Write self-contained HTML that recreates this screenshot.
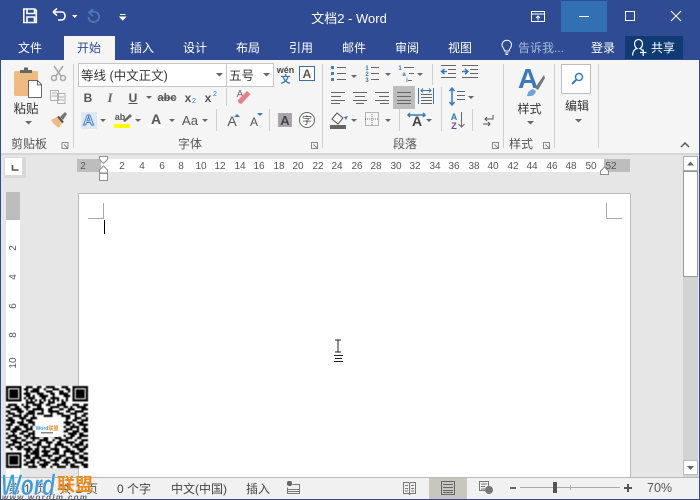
<!DOCTYPE html>
<html><head><meta charset="utf-8"><style>
html,body{margin:0;padding:0;width:700px;height:500px;overflow:hidden;background:#f1f1f1}
svg{display:block}
text{font-family:"Liberation Sans","Noto Sans CJK SC",sans-serif;font-size:12px;fill:#444}
.m{text-anchor:middle}
.r text{font-size:10px;fill:#555;text-anchor:middle}
.w{fill:#fff}
.tab text{fill:#fff;text-anchor:middle}
.arr{fill:#666}
.l{stroke:#666;stroke-width:1;fill:none}
.b{stroke:#4a7ebb;fill:none}
.sep{stroke:#d0d0d0;stroke-width:1}
</style></head><body>
<svg width="700" height="500" viewBox="0 0 700 500" xmlns="http://www.w3.org/2000/svg">
<defs><filter id="soft" x="-2%" y="-2%" width="104%" height="104%"><feGaussianBlur stdDeviation="0.4"/></filter></defs>
<rect width="700" height="60" fill="#2f4b93"/>
<rect y="60" width="700" height="93" fill="#f5f5f5"/>
<rect y="153" width="700" height="2" fill="#d6d6d6"/>
<rect y="155" width="700" height="322" fill="#e6e6e6"/>
<rect y="477" width="700" height="22" fill="#f1f1f1"/>
<rect y="499" width="700" height="1" fill="#2f4b93"/>
<rect x="0" y="0" width="1" height="500" fill="#2f4b93"/>
<rect x="699" y="0" width="1" height="500" fill="#2f4b93"/>

<!-- QAT -->
<g fill="none" stroke="#fff" stroke-width="1.6">
<path d="M23.800 9h11l1.500 1.500v12h-12.500z"/><path d="M27 9.500v4h7.500v-4M27 22v-5h7.500v5"/>
<path d="M53 12h8.500q3.500 0 3.500 4t-4 4h-3M53 12l4-3.500M53 12l4 3.500"/>
</g>
<path d="M72 15h5.500l-2.750 3z" fill="#fff"/>
<path d="M93 9l-4 3.500 4 3.500M89.500 12.500q3-1.500 6-.5 4.500 2 3.500 6.500-2 4-6.500 3.500-4-1-4-5" fill="none" stroke="#4d7ab5" stroke-width="1.700"/>
<path d="M120 14.500h5.500M120 17h5.500l-2.750 3z" stroke="#fff" stroke-width="1" fill="#fff"/>
<text x="349" y="23" class="m w" style="font-size:13px">文档2 - Word</text>

<!-- window buttons -->
<g fill="none" stroke="#fff" stroke-width="1">
<path d="M531.500 11.500h13v10h-13zM531.500 14h13M538 20.500v-4M536 18l2-2 2 2"/>
<rect x="561" y="1" width="46" height="31" fill="#3170b3" stroke="none"/>
<path d="M579 16.500h10"/><rect x="625.500" y="11.500" width="9" height="9"/><path d="M671 11l10 10M681 11l-10 10"/>
</g>

<!-- tabs -->
<rect x="64" y="36" width="51" height="24" fill="#f5f5f5"/>
<g class="tab">
<text x="30" y="52">文件</text><text x="142" y="52">插入</text><text x="195" y="52">设计</text><text x="248" y="52">布局</text><text x="301" y="52">引用</text><text x="354" y="52">邮件</text><text x="407" y="52">审阅</text><text x="460" y="52">视图</text><text x="603" y="52">登录</text>
</g>
<text x="89" y="52" class="m" style="fill:#2f4b93">开始</text>
<path d="M504.500 51c0-2.500-2.500-3.500-2.500-6a4.800 4.800 0 0 1 9.600 0c0 2.500-2.500 3.500-2.500 6zM505 53h3.600M505.500 54.500h2.600" fill="none" stroke="#fff" stroke-width="1"/>
<text x="518" y="52" style="fill:#a9bad8">告诉我...</text>
<rect x="625" y="36" width="58" height="23" fill="#0f3a73"/>
<path d="M632.500 55.500q.5-6 4.500-7-2.500-1.500-2.500-5a4 4 0 0 1 8 0q0 3.500-2.500 5 1.500.5 2.500 2M640 52.500h6.500M643.250 49.500v6.500" fill="none" stroke="#fff" stroke-width="1.200"/>
<text x="663" y="52" class="m w">共享</text>

<!-- separators -->
<g class="sep">
<path d="M73.500 64v84M322.500 64v84M503.500 64v84M554.500 64v84M598.500 64v84"/>
<path d="M226.500 88v18M216.500 109v22M269.500 109v22M432.500 64v21M441.500 87v44M399.500 109v22M441.500 109v22M472.500 109v22"/>
</g>

<!-- clipboard -->
<rect x="14" y="71" width="24" height="25" rx="1.500" fill="#eebb82"/>
<path d="M20 73v-3h4v-2.500h4v2.500h4v3z" fill="#666"/>
<path d="M28.500 80.500h9l4 4v13h-13z" fill="#fff" stroke="#666"/>
<path d="M37.500 80.500v4.500h4" fill="none" stroke="#666"/>
<text x="26" y="113" class="m" style="font-size:12.500px;fill:#333">粘贴</text>
<path d="M25 121h7l-3.500 3.500z" class="arr"/>
<g fill="none" stroke="#aaa" stroke-width="1.600"><path d="M54 66l7 10M63 66l-7 10"/><circle cx="54" cy="78" r="2.500"/><circle cx="63" cy="78" r="2.500"/></g>
<g fill="none" stroke="#b0b0b0"><path d="M50.500 90.500h8v10h-8zM57.500 93.500h7.500v10h-7.500zM52 93h5M52 96h5M59 97h5M59 100h5"/></g>
<path d="M51 120l6-3 5 6-3 5q-5-3-8-8z" fill="#eebb82"/><path d="M57 117l2-1 5 6-2 1z" fill="#555"/><path d="M60 117l5-5 2 2-4 6z" fill="#777"/>
<text x="29" y="148" class="m" style="fill:#555">剪贴板</text>
<path d="M62 142.500h6v6M62 142.500v6h6M64 144.500l4 4" fill="none" stroke="#888"/>

<!-- font -->
<rect x="78.500" y="63.500" width="148" height="23" fill="#fff" stroke="#c6c6c6"/>
<rect x="226.500" y="63.500" width="47" height="23" fill="#fff" stroke="#c6c6c6"/>
<text x="81" y="80" style="font-size:12.500px;fill:#333">等线 (中文正文)</text>
<text x="229" y="80" style="font-size:12.500px;fill:#333">五号</text>
<path d="M216 73h7l-3.500 3.500zM263 73h7l-3.500 3.500z" class="arr"/>
<text x="285.500" y="73" class="m" style="font-size:9px;font-weight:bold;fill:#444">wén</text>
<text x="285.500" y="83" class="m" style="font-size:10px;font-weight:bold;fill:#2e75b6">文</text>
<rect x="299.500" y="66.500" width="15" height="14" fill="#fff" stroke="#3a6ea5"/>
<text x="307" y="78" class="m" style="font-size:12px;font-weight:bold;fill:#555">A</text>
<text x="88" y="102" class="m" style="font-weight:bold;fill:#555">B</text>
<text x="110" y="102" class="m" style="font-family:'Liberation Serif',serif;font-style:italic;font-weight:bold;font-size:13px;fill:#666">I</text>
<text x="133" y="102" class="m" style="font-weight:bold;fill:#555">U</text>
<path d="M128.500 103.500h9" stroke="#555"/>
<path d="M146 96h6l-3 3zM100 119h6l-3 3zM135 119h6l-3 3zM169 119h6l-3 3zM202 119h6l-3 3zM351 75h6l-3 3zM385 73h6l-3 3zM417 73h6l-3 3zM351 119h6l-3 3zM385 119h6l-3 3zM426 119h6l-3 3zM468 96h6l-3 3z" class="arr"/>
<text x="167" y="101" class="m" style="font-size:11px;fill:#555;font-weight:bold;text-decoration:line-through">abc</text>
<text x="188" y="102" class="m" style="font-weight:bold;font-size:12px;fill:#555">x</text>
<text x="194" y="103" class="m" style="font-size:7px;fill:#2e75b6">2</text>
<text x="208" y="102" class="m" style="font-weight:bold;font-size:12px;fill:#555">x</text>
<text x="215" y="96" class="m" style="font-size:7px;fill:#2e75b6">2</text>
<text x="240" y="97" class="m" style="font-size:10px;fill:#666">A</text>
<path d="M238 100l9-9 3.500 3-9 10-3-1z" fill="#ea7f8a"/>
<rect x="81" y="112" width="16" height="17" fill="#dfe8f2"/>
<text x="88.500" y="125" class="m" style="font-size:15px;font-weight:bold;fill:#fff;stroke:#3b78c4;stroke-width:1">A</text>
<text x="120" y="120" class="m" style="font-size:9px;font-weight:bold;fill:#555">ab</text>
<path d="M123 121l7-7 2 2-7 6z" fill="#666"/>
<rect x="114" y="124" width="16" height="4" fill="#ff0"/>
<text x="156" y="124" class="m" style="font-size:14px;fill:#555;font-weight:bold">A</text>
<rect x="148" y="125" width="16" height="3" fill="#fff"/>
<text x="190" y="125" class="m" style="font-size:13px;fill:#555">Aa</text>
<text x="232" y="126" class="m" style="font-size:14px;fill:#555">A</text>
<path d="M234 117l3-3 3 3z" fill="#3a78bd"/>
<text x="254" y="126" class="m" style="font-size:12px;fill:#555">A</text>
<path d="M257 113h6l-3 3z" fill="#3a78bd"/>
<rect x="278" y="113" width="14" height="14" fill="#aaa5a8"/>
<text x="285" y="125" class="m" style="font-size:13px;font-weight:bold;fill:#444">A</text>
<circle cx="307" cy="120" r="7.500" fill="#fff" stroke="#666"/>
<text x="307" y="124" class="m" style="font-size:10px;fill:#444">字</text>
<text x="190" y="148" class="m" style="fill:#555">字体</text>
<path d="M311.500 142.500h6v6h-6zM313.500 144.500l4 4" fill="none" stroke="#888"/>

<!-- paragraph -->
<g fill="#4a7ebb"><rect x="331" y="66" width="3" height="3"/><rect x="331" y="72" width="3" height="3"/><rect x="331" y="78" width="3" height="3"/></g>
<path d="M337 67.500h9M337 73.500h9M337 79.500h9M371 67.500h8M371 73.500h8M371 79.500h8M404 67.500h10M409 73.500h5M408 80.500h4M441 65.500h15M448 69.500h8M448 73.500h8M441 77.500h15M462 65.500h16M470 69.500h8M470 73.500h8M462 77.500h16" stroke="#666" fill="none"/>
<text x="367" y="70" class="m" style="font-size:6px;font-weight:bold;fill:#2e75b6">1</text>
<text x="367" y="76" class="m" style="font-size:6px;font-weight:bold;fill:#2e75b6">2</text>
<text x="367" y="82" class="m" style="font-size:6px;font-weight:bold;fill:#2e75b6">3</text>
<text x="400" y="70" class="m" style="font-size:6px;font-weight:bold;fill:#2e75b6">1</text>
<text x="404" y="76" class="m" style="font-size:6px;font-weight:bold;fill:#2e75b6">a</text>
<text x="407" y="82" class="m" style="font-size:6px;font-weight:bold;fill:#2e75b6">i</text>
<path d="M447 71.500h-5M444.500 69l-3 2.500 3 2.500M462 71.500h6M465 69l3 2.500-3 2.500" stroke="#3a78bd" stroke-width="1.500" fill="none"/>
<rect x="393" y="86" width="22" height="23" fill="#bdbdbd"/>
<path d="M331 92.500h14M331 96.500h10M331 100.500h14M331 103.500h9M353 92.500h14M355 96.500h10M353 100.500h14M356 103.500h8M375 92.500h14M379 96.500h10M375 100.500h14M380 103.500h9M397 92.500h14M397 96.500h14M397 100.500h14M397 103.500h14M421 94.500h11M421 97.500h11M421 100.500h11M421 103.500h11" stroke="#666" fill="none"/>
<path d="M418.500 88v16M433.500 88v16M421 90.500h10M423 88.500l-2 2 2 2M429 88.500l2 2-2 2" stroke="#3a78bd" fill="none"/>
<path d="M452 88v17M449.500 91l2.500-3 2.500 3M449.500 102l2.500 3 2.500-3" stroke="#3a78bd" stroke-width="1.500" fill="none"/>
<path d="M457 91.500h8M457 95.500h8M457 99.500h8" stroke="#666" fill="none"/>
<path d="M332 119l5-6 6 5-5 6z" fill="#fff" stroke="#555"/>
<path d="M344 117l2 3 2-4z" fill="#3a78bd"/>
<rect x="330" y="125" width="16" height="4" fill="#666"/>
<path d="M365.500 112.500h13v13h-13zM372 112v14M365 119h14" stroke="#777" stroke-dasharray="1 1" fill="none"/>
<text x="417" y="126" class="m" style="font-size:14px;font-weight:bold;fill:#444">A</text>
<path d="M408 115h17M410 113l-2 2 2 2M423 113l2 2-2 2" stroke="#3a78bd" stroke-width="1.500" fill="none"/>
<text x="454" y="120" class="m" style="font-size:9px;font-weight:bold;fill:#2e75b6">A</text>
<text x="454" y="129" class="m" style="font-size:9px;font-weight:bold;fill:#7a3f98">Z</text>
<path d="M461.500 112v15M458.500 124l3 3 3-3" stroke="#666" fill="none"/>
<path d="M493 115v4h-8M487 117l-2 2 2 2M483 124h7M488 122l2 2-2 2" stroke="#555" fill="none"/>
<text x="405" y="148" class="m" style="fill:#555">段落</text>
<path d="M492.500 142.500h6v6h-6zM494.500 144.500l4 4" fill="none" stroke="#888"/>

<!-- styles -->
<text x="528" y="88" class="m" style="font-size:28px;font-weight:bold;fill:#3f7ab8">A</text>
<path d="M527 96q1-6 6-7l3 2q-1 6-9 5z" fill="#6ea3d8"/><path d="M535 88l9-13 1 3-7 12z" fill="#777"/>
<text x="529.500" y="113" class="m" style="fill:#333">样式</text>
<path d="M527 121h7l-3.500 3.500z" class="arr"/>
<text x="521" y="148" class="m" style="fill:#555">样式</text>
<path d="M543.500 142.500h6v6h-6zM545.500 144.500l4 4" fill="none" stroke="#888"/>
<!-- edit -->
<rect x="561.500" y="64.500" width="29" height="29" fill="#fff" stroke="#bdbdbd"/>
<circle cx="579" cy="77" r="3.500" fill="none" stroke="#3a78bd" stroke-width="1.500"/>
<path d="M576 80l-4 4" stroke="#3a78bd" stroke-width="2"/>
<text x="577" y="110" class="m" style="fill:#333">编辑</text>
<path d="M575 119h7l-3.500 3.500z" class="arr"/>
<path d="M681 147l4-4 4 4" fill="none" stroke="#555" stroke-width="1.500"/>

<!-- tab selector -->
<rect x="4" y="157" width="22" height="21" fill="#d8d8d8"/>
<rect x="5" y="158" width="17" height="17" fill="#fff"/>
<path d="M12.500 165v5h6" fill="none" stroke="#555" stroke-width="1.600"/>

<!-- ruler -->
<rect x="77" y="159" width="553" height="13" fill="#fff"/>
<rect x="77" y="159" width="24" height="13" fill="#bdbdbd"/>
<rect x="604" y="159" width="26" height="13" fill="#bdbdbd"/>
<g class="r">
<text x="83" y="169">2</text><text x="122" y="169">2</text><text x="142" y="169">4</text><text x="162" y="169">6</text><text x="181" y="169">8</text><text x="201" y="169">10</text><text x="220" y="169">12</text><text x="240" y="169">14</text><text x="259" y="169">16</text><text x="279" y="169">18</text><text x="298" y="169">20</text><text x="318" y="169">22</text><text x="337" y="169">24</text><text x="357" y="169">26</text><text x="376" y="169">28</text><text x="396" y="169">30</text><text x="415" y="169">32</text><text x="435" y="169">34</text><text x="454" y="169">36</text><text x="474" y="169">38</text><text x="493" y="169">40</text><text x="513" y="169">42</text><text x="532" y="169">44</text><text x="552" y="169">46</text><text x="571" y="169">48</text><text x="591" y="169">50</text><text x="611" y="169">52</text>
</g>
<path d="M99.500 156.500h8v3l-4 4-4-4z M103.500 166l4 4v3h-8v-3z M99.500 173.500h8v7h-8z" fill="#fff" stroke="#8f8f8f"/>
<path d="M600.500 174.500v-3.500l4-4 4 4v3.500z" fill="#fff" stroke="#8f8f8f"/>

<!-- page -->
<rect x="78.500" y="193.500" width="552" height="284" fill="#fff" stroke="#bcbcbc"/>
<path d="M103.500 203v15.500H88M606.500 203v15.500H622" fill="none" stroke="#a8a8a8"/>
<rect x="104" y="220" width="1" height="14" fill="#000"/>
<path d="M335 340h6M335 352h6M338 340v12" stroke="#222" fill="none"/>
<path d="M334 355.500h9M335 358.500h7M334 361.500h9" stroke="#222" fill="none"/>

<!-- vertical ruler -->
<rect x="6" y="192" width="14" height="285" fill="#fff"/>
<rect x="6" y="192" width="14" height="28" fill="#bdbdbd"/>
<g class="r">
<text transform="translate(16,248) rotate(-90)">2</text>
<text transform="translate(16,277) rotate(-90)">4</text>
<text transform="translate(16,306) rotate(-90)">6</text>
<text transform="translate(16,335) rotate(-90)">8</text>
<text transform="translate(16,363) rotate(-90)">10</text>
</g>

<!-- scrollbar -->
<rect x="683" y="156" width="15" height="321" fill="#d3d3d3"/>
<rect x="683.500" y="156.500" width="14" height="14" fill="#fff" stroke="#aaa"/>
<path d="M687 165.500h7l-3.500-4z" fill="#666"/>
<rect x="683.500" y="171.500" width="14" height="105" fill="#fff" stroke="#999"/>
<rect x="683.500" y="460.500" width="14" height="14" fill="#fff" stroke="#bbb"/>
<path d="M687 466h7l-3.500 4z" fill="#666"/>

<!-- status bar -->
<rect y="477" x="1" width="698" height="1" fill="#b9b9b9"/>
<text x="8" y="493" textLength="90" style="fill:#555">第 1 页，共 1 页</text>
<text x="117" y="493" style="fill:#444">0 个字</text>
<text x="171" y="493" style="fill:#444">中文(中国)</text>
<text x="246" y="493" style="fill:#444">插入</text>
<rect x="287" y="481" width="5" height="5" rx="2" fill="#666"/>
<path d="M292.500 484.500h7v9h-12v-6M288 489.500h11M288 491.500h11" stroke="#777" fill="none"/>
<path d="M403.500 482.500h5l1 1 1-1h5v11h-5l-1 1-1-1h-5zM409.500 483v11M405 485.500h3M405 488.500h3M405 491h3M411 485.500h3M411 488.500h3M411 491h3" stroke="#777" fill="none"/>
<rect x="429" y="478" width="38" height="21" fill="#c7c7bf"/>
<path d="M441.500 481.500h13v13h-13zM443 484.500h10M443 487.500h10M443 490.500h10M443 492.500h10" stroke="#666" fill="none"/>
<path d="M479.500 481.500h9v9h-9zM481 484h6M481 486.500h4M481 489h4" stroke="#777" fill="none"/>
<circle cx="489" cy="490" r="4" fill="#777"/>
<path d="M510 488h6" stroke="#666" stroke-width="2"/>
<path d="M520 487.500h100" stroke="#aaa"/>
<path d="M570.500 485v5" stroke="#aaa"/>
<rect x="553" y="482" width="4" height="11" fill="#555"/>
<path d="M624 488h8M628 484v8" stroke="#555" stroke-width="2"/>
<text x="647" y="492" style="font-size:12.500px;fill:#555">70%</text>

<!-- QR -->
<g transform="translate(6,386)">
<rect width="82" height="82" fill="#fff"/>
<g filter="url(#soft)">
<g transform="scale(2.216)" fill="none" stroke="#000" stroke-width="1">
<path d="M.5 .5h6v6h-6zM30.500 .5h6v6h-6zM.5 30.500h6v6h-6z"/>
<path d="M2 2h3v3h-3zM32 2h3v3h-3zM2 32h3v3h-3z" fill="#000"/>
<path d="M9 .5h3M14 .5h2M18 .5h4M25 .5h3M8 1.500h2M12 1.500h3M17 1.500h1M21 1.500h3M27 1.500h2M9 2.500h1M11 2.500h4M18 2.500h3M24 2.500h2M28 2.500h1M8 3.500h3M14 3.500h3M20 3.500h2M24 3.500h4M9 4.500h2M12 4.500h1M15 4.500h4M21 4.500h1M26 4.500h3M8 5.500h1M10 5.500h3M16 5.500h2M20 5.500h4M27 5.500h1M9 6.500h1M11 6.500h1M13 6.500h1M15 6.500h1M17 6.500h1M19 6.500h1M21 6.500h1M23 6.500h1M25 6.500h1M27 6.500h1"/>
<path d="M9 7.500h4M15 7.500h2M19 7.500h3M25 7.500h2M1 8.500h4M7 8.500h1M9 8.500h1M12 8.500h4M18 8.500h2M23 8.500h4M30 8.500h3M35 8.500h2M0 9.500h2M4 9.500h2M8 9.500h3M14 9.500h2M20 9.500h4M26 9.500h2M29 9.500h1M32 9.500h4M2 10.500h5M9 10.500h1M12 10.500h5M19 10.500h2M24 10.500h2M28 10.500h3M34 10.500h3M0 11.500h2M5 11.500h3M10 11.500h3M16 11.500h1M19 11.500h5M27 11.500h2M31 11.500h4M1 12.500h3M6 12.500h1M9 12.500h4M14 12.500h3M20 12.500h1M23 12.500h3M29 12.500h3M35 12.500h2"/>
<path d="M0 13.500h1M3 13.500h4M8 13.500h2M12 13.500h1M17 13.500h4M25 13.500h4M31 13.500h1M34 13.500h2M1 14.500h2M6 14.500h3M11 14.500h3M27 14.500h2M31 14.500h3M36 14.500h1M0 15.500h4M7 15.500h1M9 15.500h3M27 15.500h1M30 15.500h2M34 15.500h3M2 16.500h2M5 16.500h3M10 16.500h3M26 16.500h4M32 16.500h3M0 17.500h3M6 17.500h4M12 17.500h1M27 17.500h2M30 17.500h1M33 17.500h4M1 18.500h1M4 18.500h2M8 18.500h2M11 18.500h1M26 18.500h1M29 18.500h4M35 18.500h1M0 19.500h2M3 19.500h4M9 19.500h3M27 19.500h3M32 19.500h1M34 19.500h3M2 20.500h3M7 20.500h3M12 20.500h1M26 20.500h2M30 20.500h3M35 20.500h2M0 21.500h1M3 21.500h1M6 21.500h2M10 21.500h3M28 21.500h4M33 21.500h2M1 22.500h4M8 22.500h3M12 22.500h1M15 22.500h2M20 22.500h3M26 22.500h1M29 22.500h2M33 22.500h4"/>
<path d="M0 23.500h2M4 23.500h3M9 23.500h1M11 23.500h4M17 23.500h2M22 23.500h3M27 23.500h3M32 23.500h2M2 24.500h3M7 24.500h2M12 24.500h1M15 24.500h4M21 24.500h1M24 24.500h4M31 24.500h1M34 24.500h3M0 25.500h1M3 25.500h4M9 25.500h3M14 25.500h2M18 25.500h3M23 25.500h2M27 25.500h4M33 25.500h2M1 26.500h3M6 26.500h1M8 26.500h2M12 26.500h4M19 26.500h1M22 26.500h4M29 26.500h1M31 26.500h4M36 26.500h1M0 27.500h2M4 27.500h4M10 27.500h1M14 27.500h1M16 27.500h4M22 27.500h1M25 27.500h3M30 27.500h3M35 27.500h2M2 28.500h1M5 28.500h2M8 28.500h4M13 28.500h2M17 28.500h1M20 28.500h4M27 28.500h2M32 28.500h4M9 29.500h2M12 29.500h3M16 29.500h4M22 29.500h2M26 29.500h5M33 29.500h2"/>
<path d="M9 30.500h1M11 30.500h4M17 30.500h2M21 30.500h3M26 30.500h1M29 30.500h4M35 30.500h2M8 31.500h3M13 31.500h2M16 31.500h5M24 31.500h3M30 31.500h1M33 31.500h2M9 32.500h2M12 32.500h4M19 32.500h1M22 32.500h3M27 32.500h4M33 32.500h4M8 33.500h1M11 33.500h2M15 33.500h3M20 33.500h4M26 33.500h2M30 33.500h2M35 33.500h2M9 34.500h4M14 34.500h1M17 34.500h3M22 34.500h1M25 34.500h4M31 34.500h4M8 35.500h2M12 35.500h1M15 35.500h4M21 35.500h3M27 35.500h1M29 35.500h2M34 35.500h3M10 36.500h4M16 36.500h2M20 36.500h1M23 36.500h4M29 36.500h4M35 36.500h2"/>
</g>
</g>
<rect x="30" y="36" width="22" height="15" fill="#fff"/>
<text x="41" y="44" class="m" style="font-size:5px;font-weight:bold;fill:#3b9ad9">Word<tspan style="fill:#f08a1d">联盟</tspan></text>
<rect x="35" y="46" width="12" height="1.500" fill="#888"/>
</g>

<!-- logo -->
<text x="1" y="495" textLength="54" lengthAdjust="spacingAndGlyphs" style="font-size:30px;font-weight:bold;font-style:italic;fill:#3f9bdc;stroke:#fff;stroke-width:.4">Word</text>
<text x="57" y="491" style="font-size:18px;font-weight:bold;fill:#f08a1d">联盟</text>
<text x="2" y="500" textLength="85" style="font-size:8px;font-weight:bold;font-style:italic;fill:#666">www.wordlm.com</text>
</svg>
</body></html>
